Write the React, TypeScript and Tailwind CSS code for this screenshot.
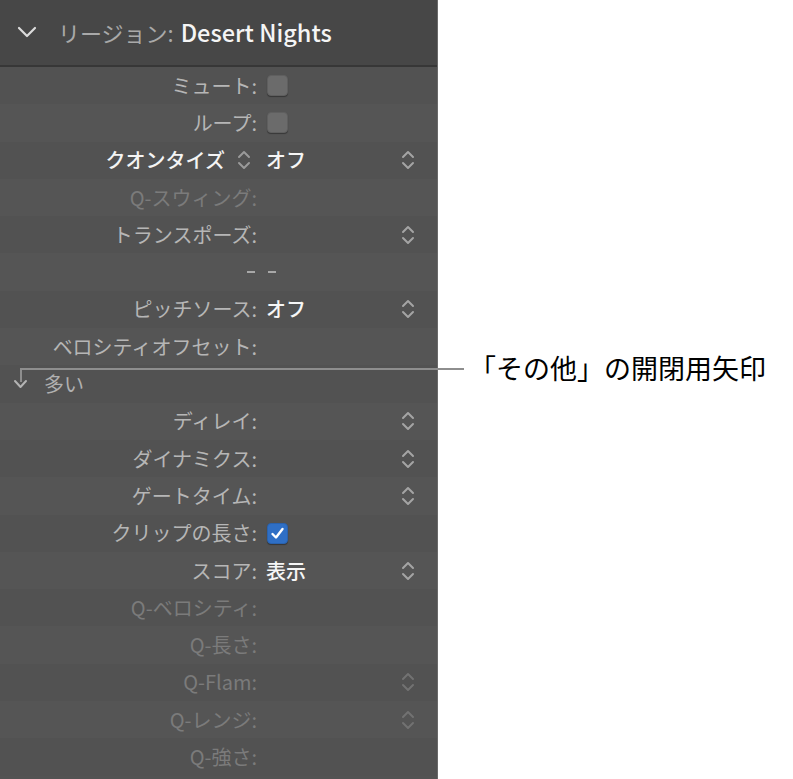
type Tone = "normal" | "dim" | "bright";

type Row =
  | {
      kind: "field";
      label: string;
      tone?: Tone;
      value?: string;
      check?: boolean;
      stepper?: "on" | "dim";
      labelStepper?: boolean;
    }
  | { kind: "dashes" }
  | { kind: "more"; label: string };

const ROWS: Row[] = [
  { kind: "field", label: "ミュート:", check: false },
  { kind: "field", label: "ループ:", check: false },
  { kind: "field", label: "クオンタイズ", tone: "bright", labelStepper: true, value: "オフ", stepper: "on" },
  { kind: "field", label: "Q-スウィング:", tone: "dim" },
  { kind: "field", label: "トランスポーズ:", stepper: "on" },
  { kind: "dashes" },
  { kind: "field", label: "ピッチソース:", value: "オフ", stepper: "on" },
  { kind: "field", label: "ベロシティオフセット:" },
  { kind: "more", label: "多い" },
  { kind: "field", label: "ディレイ:", stepper: "on" },
  { kind: "field", label: "ダイナミクス:", stepper: "on" },
  { kind: "field", label: "ゲートタイム:", stepper: "on" },
  { kind: "field", label: "クリップの長さ:", check: true },
  { kind: "field", label: "スコア:", value: "表示", stepper: "on" },
  { kind: "field", label: "Q-ベロシティ:", tone: "dim" },
  { kind: "field", label: "Q-長さ:", tone: "dim" },
  { kind: "field", label: "Q-Flam:", tone: "dim", stepper: "dim" },
  { kind: "field", label: "Q-レンジ:", tone: "dim", stepper: "dim" },
  { kind: "field", label: "Q-強さ:", tone: "dim" },
];

function Stepper({ color }: { color: string }) {
  return (
    <svg width="14" height="22" viewBox="0 0 14 22" fill="none">
      <path d="M2 8 L7 3 L12 8" stroke={color} strokeWidth="2" strokeLinecap="round" strokeLinejoin="round" />
      <path d="M2 14 L7 19 L12 14" stroke={color} strokeWidth="2" strokeLinecap="round" strokeLinejoin="round" />
    </svg>
  );
}

function Checkbox({ checked }: { checked: boolean }) {
  if (checked) {
    return (
      <div className="w-[21px] h-[21px] rounded-[4px] bg-[#2f6fc5] border border-[#2a62ad] shadow-[0_1px_1px_rgba(0,0,0,0.35)] flex items-center justify-center">
        <svg width="15" height="15" viewBox="0 0 15 15" fill="none">
          <path d="M2.5 8 L6 11.5 L12.5 3" stroke="#ffffff" strokeWidth="2.4" strokeLinecap="round" strokeLinejoin="round" />
        </svg>
      </div>
    );
  }
  return (
    <div className="w-[21px] h-[21px] rounded-[4px] bg-[#6b6b6b] border border-[#5f5f5f] shadow-[0_1px_1px_rgba(0,0,0,0.35)]" />
  );
}

const labelTone: Record<Tone, string> = {
  normal: "text-[#b6b6b6]",
  dim: "text-[#7b7b7b]",
  bright: "text-[#f4f4f4] font-medium",
};

function FieldRow({ row }: { row: Extract<Row, { kind: "field" }> }) {
  const tone = row.tone ?? "normal";
  return (
    <div className="flex items-center h-full">
      <div className={`w-[257px] flex items-center justify-end ${labelTone[tone]}`}>
        <span>{row.label}</span>
        {row.labelStepper ? (
          <span className="ml-[12px] mr-[6px] flex items-center">
            <Stepper color="#9a9a9a" />
          </span>
        ) : null}
      </div>
      <div className="flex-1 flex items-center pl-[9px]">
        {row.check !== undefined ? (
          <div className="ml-[1px]">
            <Checkbox checked={row.check} />
          </div>
        ) : null}
        {row.value ? <span className="text-[#f6f6f6] font-medium">{row.value}</span> : null}
      </div>
      <div className="w-[14px] mr-[22px] flex items-center">
        {row.stepper ? <Stepper color={row.stepper === "on" ? "#a4a4a4" : "#727272"} /> : null}
      </div>
    </div>
  );
}

export default function App() {
  return (
    <div className="relative w-[793px] h-[779px] bg-white flex overflow-hidden font-['Noto_Sans_CJK_JP','Noto_Sans',sans-serif]">
      <div className="w-[438px] h-full flex flex-col bg-[#535353] border-r border-[#6a6a6a]">
        <div className="h-[67px] shrink-0 bg-[#474747] border-b-2 border-[#373737] flex items-center pl-[17px] text-[22px]">
          <svg width="20" height="12" viewBox="0 0 20 12" fill="none" className="mt-[-2px]">
            <path d="M2 2 L10 10 L18 2" stroke="#dcdcdc" strokeWidth="2.2" strokeLinecap="round" strokeLinejoin="round" />
          </svg>
          <span className="ml-[21px] text-[#a9a9a9]">リージョン:</span>
          <span className="ml-[7px] text-[#f5f5f5] font-medium text-[23.5px]">Desert Nights</span>
        </div>
        <div className="flex-1 flex flex-col text-[20px]">
          {ROWS.map((row, i) => (
            <div
              key={i}
              className={`h-[37.3px] shrink-0 ${i % 2 === 0 ? "bg-[#525252]" : "bg-[#555555]"}`}
            >
              {row.kind === "field" ? <FieldRow row={row} /> : null}
              {row.kind === "dashes" ? (
                <div className="flex items-center h-full pl-[247px] gap-[13px]">
                  <div className="w-[8px] h-[2px] bg-[#a8a8a8]" />
                  <div className="w-[8px] h-[2px] bg-[#a8a8a8]" />
                </div>
              ) : null}
              {row.kind === "more" ? (
                <div className="flex items-center h-full pl-[13px] text-[#b0b0b0]">
                  <svg width="15" height="10" viewBox="0 0 15 10" fill="none">
                    <path d="M2 2 L7.5 8 L13 2" stroke="#b4b4b4" strokeWidth="2" strokeLinecap="round" strokeLinejoin="round" />
                  </svg>
                  <span className="ml-[16px]">{row.label}</span>
                </div>
              ) : null}
            </div>
          ))}
        </div>
      </div>

      {/* callout */}
      <div className="absolute left-[20px] top-[368px] w-[444px] h-[2px] bg-[#8e8e8e]" />
      <div className="absolute left-[20px] top-[368px] w-[2px] h-[14px] bg-[#8e8e8e]" />
      <div className="absolute left-[469px] top-[349px] text-[27px] leading-[38px] text-black">
        「その他」の開閉用矢印
      </div>
    </div>
  );
}
